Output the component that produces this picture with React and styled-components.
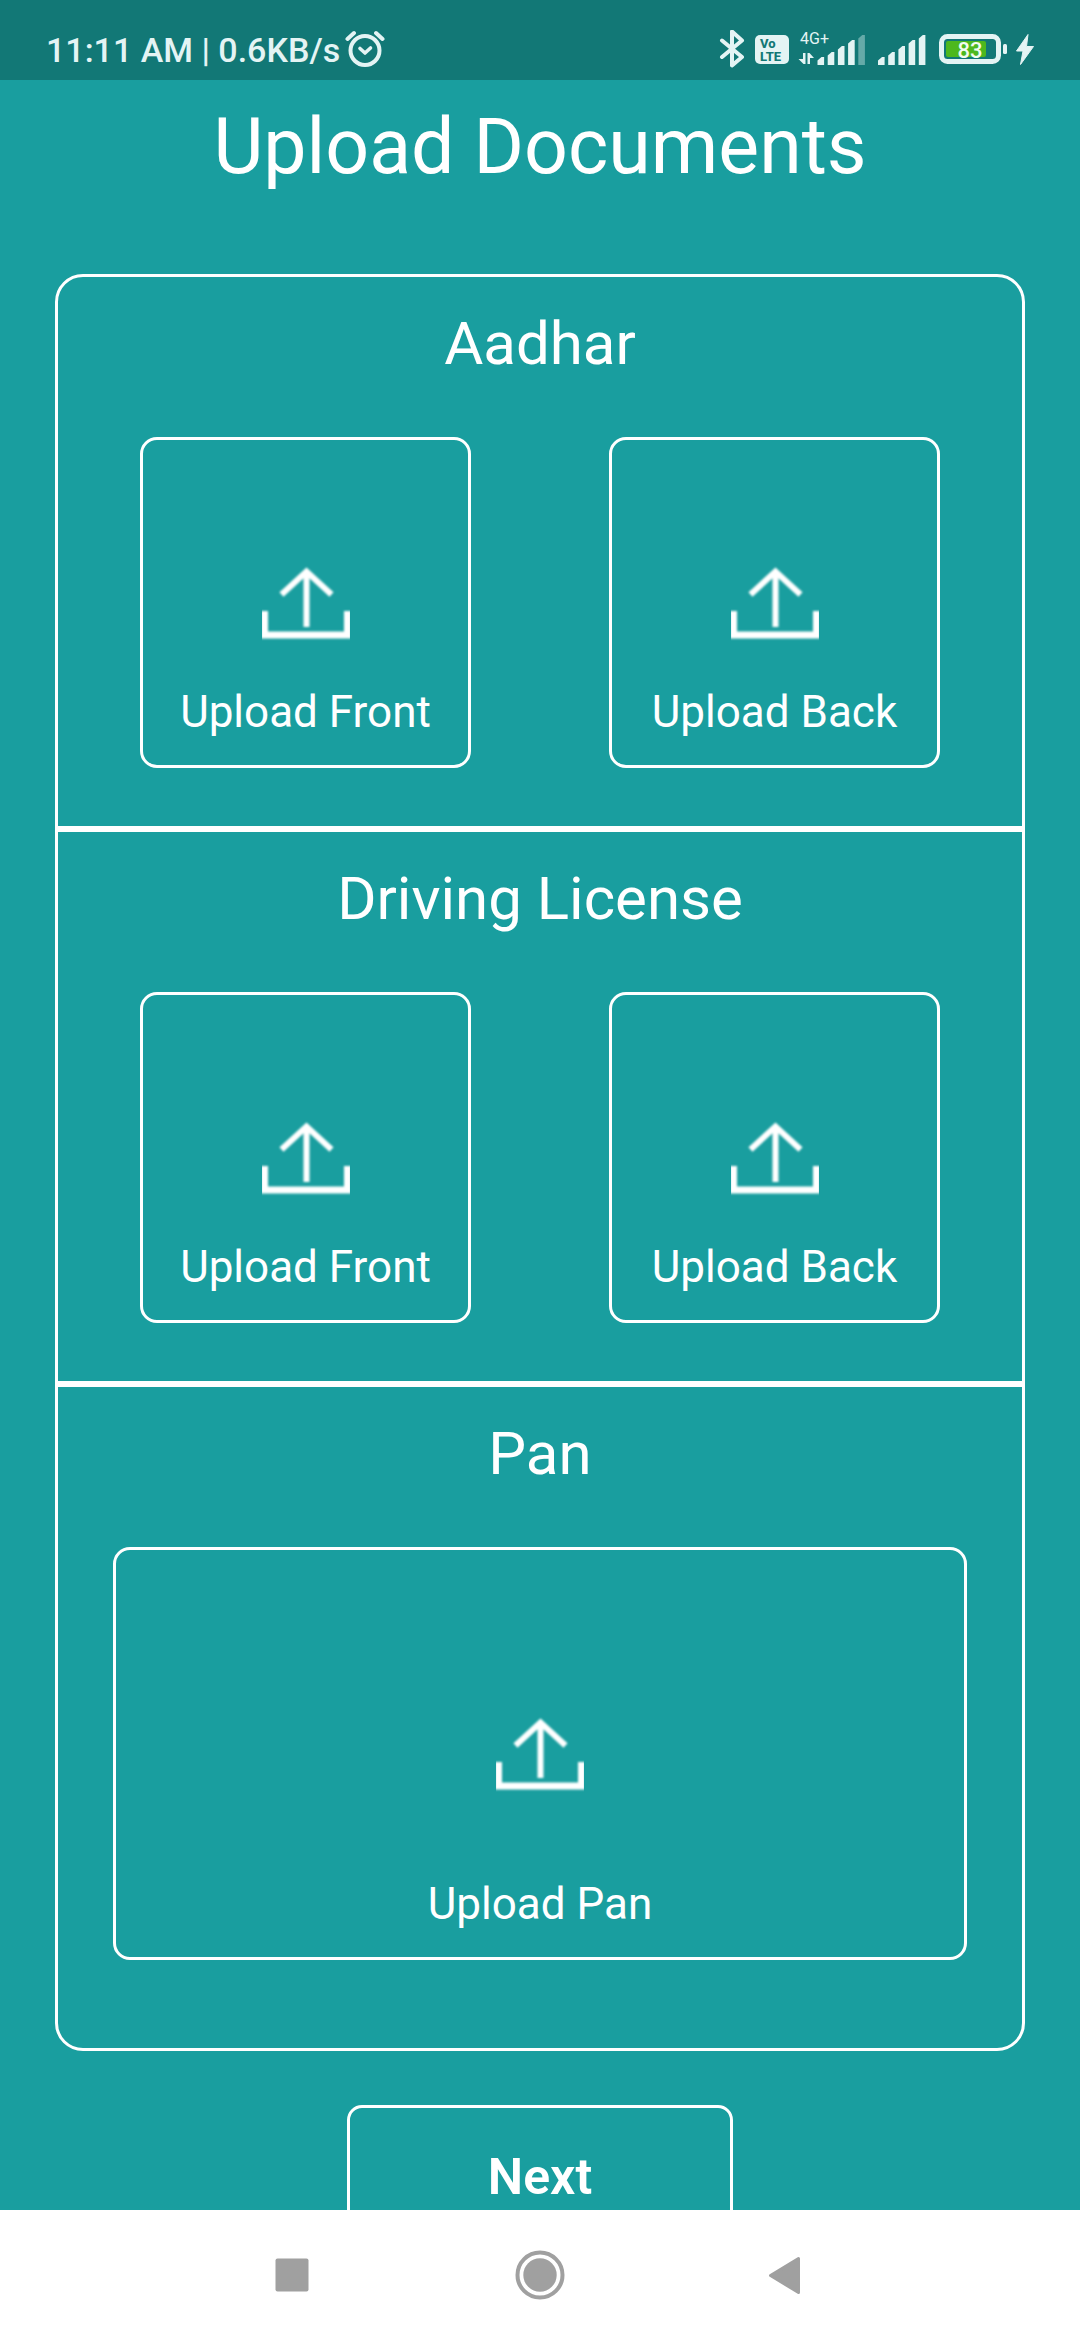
import React from "react";
import styled, { createGlobalStyle } from "styled-components";

const TEAL = "#199e9f";
const TEAL_DARK = "#127876";
const STATUS_INK = "#e4f4f4";
const NAV_GREY = "#a0a0a0";

const GlobalStyle = createGlobalStyle`
  *, *::before, *::after { box-sizing: border-box; }
  body {
    margin: 0;
    background: ${TEAL};
    font-family: Roboto, "Noto Sans", sans-serif;
  }
  svg { display: block; flex: none; }
`;

const Screen = styled.div`
  display: flex;
  flex-direction: column;
  height: 100vh;
  color: #fff;
  background: ${TEAL};
`;

const StatusBar = styled.header`
  display: flex;
  flex: none;
  justify-content: space-between;
  align-items: center;
  height: 80px;
  padding: 20px 46px 0;
  color: ${STATUS_INK};
  background: ${TEAL_DARK};
`;

const StatusGroup = styled.div`
  display: flex;
  align-items: center;
  gap: ${({ $gap }) => $gap}px;
`;

const Clock = styled.span`
  font-size: 34px;
  line-height: 40px;
  font-weight: 500;
  white-space: nowrap;
`;

const Content = styled.main`
  flex: 1;
  min-height: 0;
  overflow-y: auto;
  scrollbar-width: none;
  padding: 22px 55px 0;
  display: flex;
  flex-direction: column;
`;

const Title = styled.h1`
  margin: 0 0 82px;
  font-size: 77px;
  line-height: 90px;
  font-weight: 400;
  text-align: center;
`;

const Section = styled.section`
  flex: none;
  padding: 32px ${({ $wide }) => ($wide ? 55 : 82)}px ${({ $wide }) => ($wide ? 88 : 58)}px;
  border: 3px solid #fff;

  &:first-of-type { border-radius: 28px 28px 0 0; }
  &:last-of-type { border-radius: 0 0 28px 28px; }
`;

const SectionTitle = styled.h2`
  margin: 0 0 58px;
  font-size: 60px;
  line-height: 70px;
  font-weight: 400;
  text-align: center;
`;

const TileRow = styled.div`
  display: flex;
  gap: 138px;
`;

const Tile = styled.button`
  display: grid;
  flex: 1 1 0;
  grid-template-rows: 1fr auto 1fr;
  justify-items: center;
  min-width: 0;
  aspect-ratio: ${({ $wide }) => ($wide ? "854 / 413" : "1")};
  padding: 0;
  color: inherit;
  font: inherit;
  background: none;
  border: 3px solid #fff;
  border-radius: 17px;
  cursor: pointer;

  svg { grid-row: 2; }
`;

const TileLabel = styled.span`
  grid-row: 3;
  align-self: end;
  padding-bottom: 27px;
  font-size: 44px;
  line-height: 52px;
  white-space: nowrap;
`;

const NextButton = styled.button`
  flex: none;
  align-self: center;
  width: 386px;
  margin-top: 54px;
  padding: 39px 0;
  color: inherit;
  font-family: inherit;
  font-size: 50px;
  line-height: 60px;
  font-weight: 600;
  background: none;
  border: 3px solid #fff;
  border-radius: 15px;
  cursor: pointer;
`;

const NavBar = styled.nav`
  display: flex;
  flex: none;
  justify-content: center;
  height: 130px;
  background: #fff;
`;

const NavButton = styled.button`
  display: flex;
  justify-content: center;
  align-items: center;
  width: 248px;
  padding: 0;
  color: ${NAV_GREY};
  background: none;
  border: 0;
  cursor: pointer;
`;

const UploadIcon = () => (
  <svg width="88" height="88" viewBox="0 0 88 88" fill="none" stroke="#fff" aria-hidden="true">
    <defs>
      <filter id="soften" x="-10%" y="-10%" width="120%" height="120%">
        <feGaussianBlur stdDeviation="0.8" />
      </filter>
    </defs>
    <g filter="url(#soften)">
      <path d="M44.500 13V68" strokeWidth="6" />
      <path d="M19.500 35.500 44.500 12.500 69.500 35.500" strokeWidth="6" />
      <path d="M2.500 52V76H85.500V52" strokeWidth="7" />
    </g>
  </svg>
);

const AlarmIcon = () => (
  <svg width="40" height="40" viewBox="0 0 40 40" fill="none" stroke="currentColor" strokeLinecap="round" aria-hidden="true">
    <circle cx="20" cy="20.500" r="14.500" strokeWidth="4" />
    <path d="M2.500 9 9 3M37.500 9 31 3" strokeWidth="4" />
    <path d="M15 18.500 20 23 25.500 18" strokeWidth="3.600" strokeLinejoin="round" />
  </svg>
);

const BluetoothIcon = () => (
  <svg width="27" height="40" viewBox="0 0 27 40" fill="none" stroke="currentColor" strokeWidth="4" strokeLinecap="round" strokeLinejoin="round" aria-hidden="true">
    <path d="M3 10.500 23 27 13 35.500V1.500L23 10.500 3 27" />
  </svg>
);

const VolteIcon = () => (
  <svg width="34" height="40" viewBox="0 0 34 40" role="img" aria-label="VoLTE">
    <rect y="5" width="34" height="29" rx="5" fill="currentColor" />
    <g fill={TEAL_DARK} fontFamily="Roboto, sans-serif" fontWeight="800">
      <text x="5" y="18" fontSize="13">Vo</text>
      <text x="5" y="31" fontSize="13">LTE</text>
    </g>
  </svg>
);

const BAR_TOPS = [27, 22, 16, 10, 5];

const Bars = ({ x, faded }) =>
  BAR_TOPS.map((top, i) => {
    const left = x + i * 10.2;
    return (
      <path
        key={top}
        d={`M${left} ${top + 3.500}L${left + 4} ${top}H${left + 6.600}V35H${left}Z`}
        fill="currentColor"
        opacity={faded && i === 4 ? 0.4 : 1}
      />
    );
  });

const DataSignalIcon = () => (
  <svg width="70" height="40" viewBox="0 0 70 40" role="img" aria-label="4G+ signal">
    <text x="2" y="14" fontSize="16" fontFamily="Roboto, sans-serif" fill="currentColor">4G+</text>
    <path d="M5 23H7.500V34H5.500L0.500 29H5ZM9.500 23H11.500L16 28H12V34H9.500Z" fill="currentColor" />
    <Bars x={19.5} faded />
  </svg>
);

const SignalIcon = () => (
  <svg width="52" height="40" viewBox="0 0 52 40" role="img" aria-label="Signal">
    <Bars x={1} />
  </svg>
);

const BatteryIcon = () => (
  <svg width="69" height="40" viewBox="0 0 69 40" role="img" aria-label="Battery 83%">
    <rect x="3.500" y="6.500" width="57" height="25" rx="6" fill="none" stroke="currentColor" strokeWidth="5" />
    <rect x="8" y="11" width="40" height="16" rx="2" fill="#4db81e" />
    <rect x="65" y="14" width="4" height="10" rx="1.500" fill="currentColor" />
    <text x="32" y="28" fontSize="22" fontWeight="500" textAnchor="middle" fontFamily="Roboto, sans-serif" fill="#f2fbf0">83</text>
  </svg>
);

const BoltIcon = () => (
  <svg width="18" height="40" viewBox="0 0 18 40" aria-hidden="true">
    <path d="M12 4.500 0.500 21H7L4.500 34.500 17.500 16.500H10.500Z" fill="currentColor" stroke="currentColor" strokeLinejoin="round" />
  </svg>
);

const RecentsIcon = () => (
  <svg width="48" height="50" viewBox="0 0 48 50" fill="currentColor" aria-hidden="true">
    <rect x="7.500" y="8.500" width="33" height="33" rx="2" />
  </svg>
);

const HomeIcon = () => (
  <svg width="50" height="50" viewBox="0 0 50 50" aria-hidden="true">
    <circle cx="25" cy="25" r="22.500" fill="none" stroke="currentColor" strokeWidth="4" />
    <circle cx="25" cy="25" r="16.700" fill="currentColor" />
  </svg>
);

const BackIcon = () => (
  <svg width="48" height="50" viewBox="0 0 48 50" fill="currentColor" stroke="currentColor" strokeWidth="3" strokeLinejoin="round" aria-hidden="true">
    <path d="M6.500 25.500 34.500 8.500V42.500Z" />
  </svg>
);

const DOCUMENTS = [
  { name: "Aadhar", uploads: ["Upload Front", "Upload Back"] },
  { name: "Driving License", uploads: ["Upload Front", "Upload Back"] },
  { name: "Pan", uploads: ["Upload Pan"] },
];

const DocumentSection = ({ name, uploads }) => {
  const wide = uploads.length === 1;
  return (
    <Section $wide={wide}>
      <SectionTitle>{name}</SectionTitle>
      <TileRow>
        {uploads.map((label) => (
          <Tile key={label} type="button" $wide={wide}>
            <UploadIcon />
            <TileLabel>{label}</TileLabel>
          </Tile>
        ))}
      </TileRow>
    </Section>
  );
};

export default function App() {
  return (
    <>
      <GlobalStyle />
      <Screen>
        <StatusBar>
          <StatusGroup $gap={5}>
            <Clock>11:11 AM | 0.6KB/s</Clock>
            <AlarmIcon />
          </StatusGroup>
          <StatusGroup $gap={9}>
            <BluetoothIcon />
            <VolteIcon />
            <DataSignalIcon />
            <SignalIcon />
            <BatteryIcon />
            <BoltIcon />
          </StatusGroup>
        </StatusBar>
        <Content>
          <Title>Upload Documents</Title>
          {DOCUMENTS.map((doc) => (
            <DocumentSection key={doc.name} {...doc} />
          ))}
          <NextButton type="button">Next</NextButton>
        </Content>
        <NavBar>
          <NavButton type="button" aria-label="Recent apps"><RecentsIcon /></NavButton>
          <NavButton type="button" aria-label="Home"><HomeIcon /></NavButton>
          <NavButton type="button" aria-label="Back"><BackIcon /></NavButton>
        </NavBar>
      </Screen>
    </>
  );
}
